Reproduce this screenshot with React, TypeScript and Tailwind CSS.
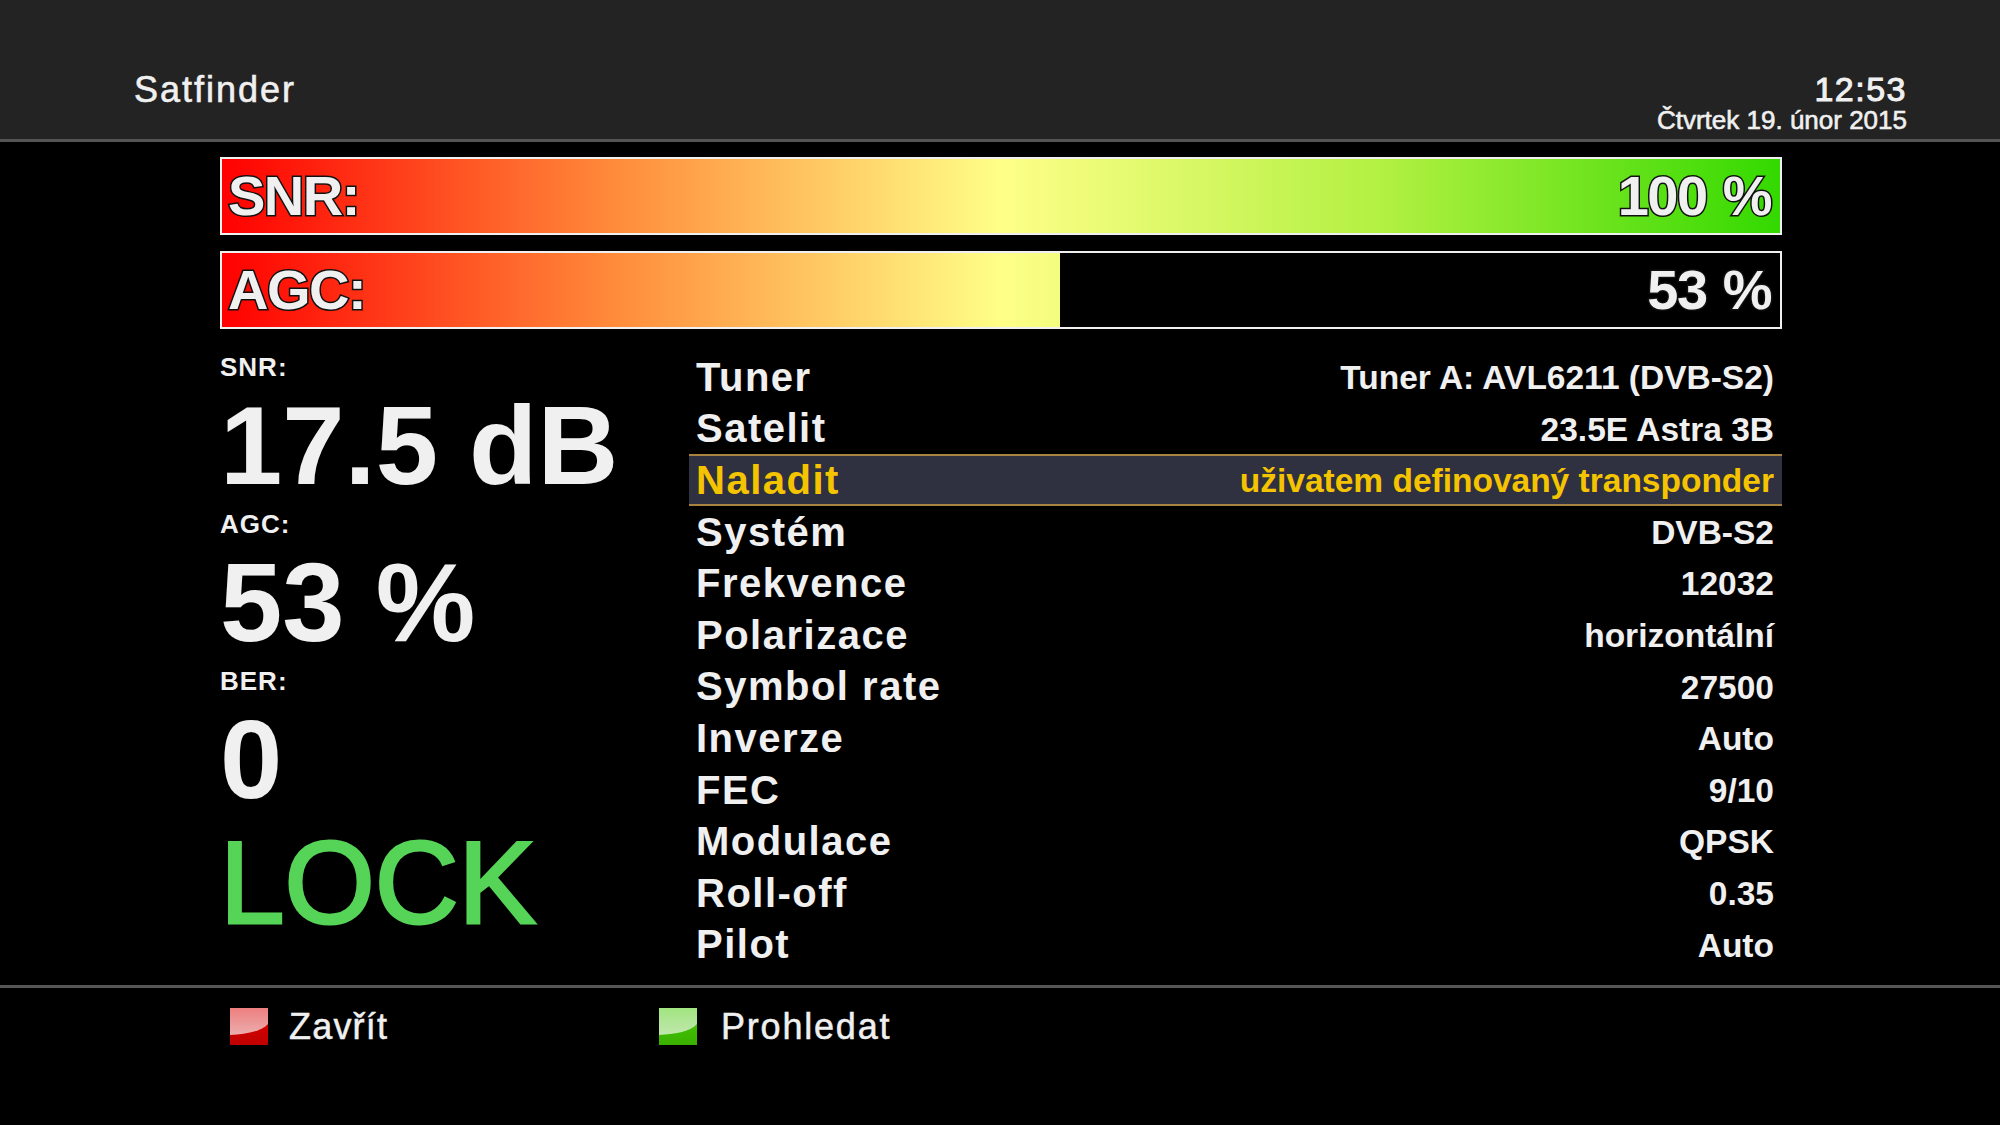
import React from 'react';

const rows = [
  { label: 'Tuner', value: 'Tuner A: AVL6211 (DVB-S2)' },
  { label: 'Satelit', value: '23.5E Astra 3B' },
  { label: 'Naladit', value: 'uživatem definovaný transponder', active: true },
  { label: 'Systém', value: 'DVB-S2' },
  { label: 'Frekvence', value: '12032' },
  { label: 'Polarizace', value: 'horizontální' },
  { label: 'Symbol rate', value: '27500' },
  { label: 'Inverze', value: 'Auto' },
  { label: 'FEC', value: '9/10' },
  { label: 'Modulace', value: 'QPSK' },
  { label: 'Roll-off', value: '0.35' },
  { label: 'Pilot', value: 'Auto' },
];

const stats = [
  { label: 'SNR:', value: '17.5 dB' },
  { label: 'AGC:', value: '53 %' },
  { label: 'BER:', value: '0' },
];

function Bar({ label, value, fillClass }: { label: string; value: string; fillClass: string }) {
  return (
    <div className="relative h-[78px] w-[1562px] border-2 border-[#f0f0f0] bg-black">
      <div className={`h-full overflow-hidden ${fillClass}`}>
        <div className="h-full w-[1558px] bg-[linear-gradient(90deg,#ff0000_0%,#ff8a3a_25%,#ffff88_50%,#b0f040_75%,#33d900_100%)]" />
      </div>
      <div className="absolute inset-0 flex items-center justify-between pl-[6px] pr-[9px] text-[56px] font-bold leading-none tracking-[-1.5px] text-[#f0f0f0] [word-spacing:2px] [-webkit-text-stroke:3px_#111] [paint-order:stroke_fill]">
        <span>{label}</span>
        <span>{value}</span>
      </div>
    </div>
  );
}

function KeyIcon({ id, base, dark }: { id: string; base: string; dark: string }) {
  return (
    <svg width="40" height="39" viewBox="0 0 40 39">
      <defs>
        <linearGradient id={id} x1="0" y1="0" x2="0" y2="1">
          <stop offset="0" stopColor={base} />
          <stop offset="1" stopColor={dark} />
        </linearGradient>
        <linearGradient id={`${id}-gloss`} x1="0" y1="0" x2="0" y2="1">
          <stop offset="0" stopColor="#fff" stopOpacity="0.5" />
          <stop offset="1" stopColor="#fff" stopOpacity="0.68" />
        </linearGradient>
      </defs>
      <rect x="1" y="1" width="38" height="37" fill={`url(#${id})`} />
      <path d="M1 1 H39 V17 C32 25 16 27 1 28 Z" fill={`url(#${id}-gloss)`} />
      <rect x="0.5" y="0.5" width="39" height="38" fill="none" stroke="#000" strokeOpacity="0.45" />
    </svg>
  );
}

export default function App() {
  return (
    <div className="flex h-[1125px] w-[2000px] flex-col overflow-hidden bg-black font-['Liberation_Sans',Arial,sans-serif] text-[#f0f0f0]">
      <header className="flex h-[142px] items-end justify-between border-b-[3px] border-[#555] bg-[#232323] pb-[5px] pl-[134px] pr-[93px] [-webkit-text-stroke:0.6px_#f0f0f0]">
        <div className="mb-[26px] text-[36px] leading-none tracking-[2px]">Satfinder</div>
        <div className="flex flex-col items-end">
          <div className="text-[34px] leading-[34px] tracking-[1.5px] [-webkit-text-stroke:1px_#f0f0f0]">12:53</div>
          <div className="text-[26px] leading-[28px]">Čtvrtek 19. únor 2015</div>
        </div>
      </header>

      <div className="ml-[220px] mt-[15px] flex flex-col gap-[16px]">
        <Bar label="SNR:" value="100 %" fillClass="w-full" />
        <Bar label="AGC:" value="53 %" fillClass="w-[838px]" />
      </div>

      <main className="ml-[220px] mt-[16px] flex w-[1562px]">
        <div className="w-[469px] font-bold">
          {stats.map((s) => (
            <div key={s.label} className="h-[157px]">
              <div className="h-[44px] text-[26px] leading-[44px] tracking-[1px]">{s.label}</div>
              <div className="h-[113px] text-[112px] leading-[113px]">{s.value}</div>
            </div>
          ))}
          <div className="h-[134px] text-[116px] font-normal leading-[134px] text-[#55d457] [-webkit-text-stroke:3px_#55d457]">LOCK</div>
        </div>
        <div className="w-[1093px] pt-[6px]">
          {rows.map((r) => (
            <div
              key={r.label}
              className={
                r.active
                  ? 'flex h-[51.6px] items-center justify-between border-y-2 border-[#a8823f] bg-[#2f3040] pl-[7px] pr-[8px] font-bold text-[#f5c400]'
                  : 'flex h-[51.6px] items-center justify-between pl-[7px] pr-[8px] font-bold'
              }
            >
              <span className="text-[40px] leading-none tracking-[1.5px]">{r.label}</span>
              <span className="pt-[2px] text-[33.5px] leading-none">{r.value}</span>
            </div>
          ))}
        </div>
      </main>

      <footer className="mt-auto flex h-[140px] border-t-[3px] border-[#555] pl-[229px] pt-[19px] [-webkit-text-stroke:0.5px_#f0f0f0]">
        <div className="flex h-[39px] w-[429px] items-center gap-[20px]">
          <KeyIcon id="key-red" base="#dd0000" dark="#c00000" />
          <span className="text-[36px] leading-none tracking-[1.2px]">Zavřít</span>
        </div>
        <div className="flex h-[39px] items-center gap-[23px]">
          <KeyIcon id="key-green" base="#44cc00" dark="#3ab000" />
          <span className="text-[36px] leading-none tracking-[1.8px]">Prohledat</span>
        </div>
      </footer>
    </div>
  );
}
